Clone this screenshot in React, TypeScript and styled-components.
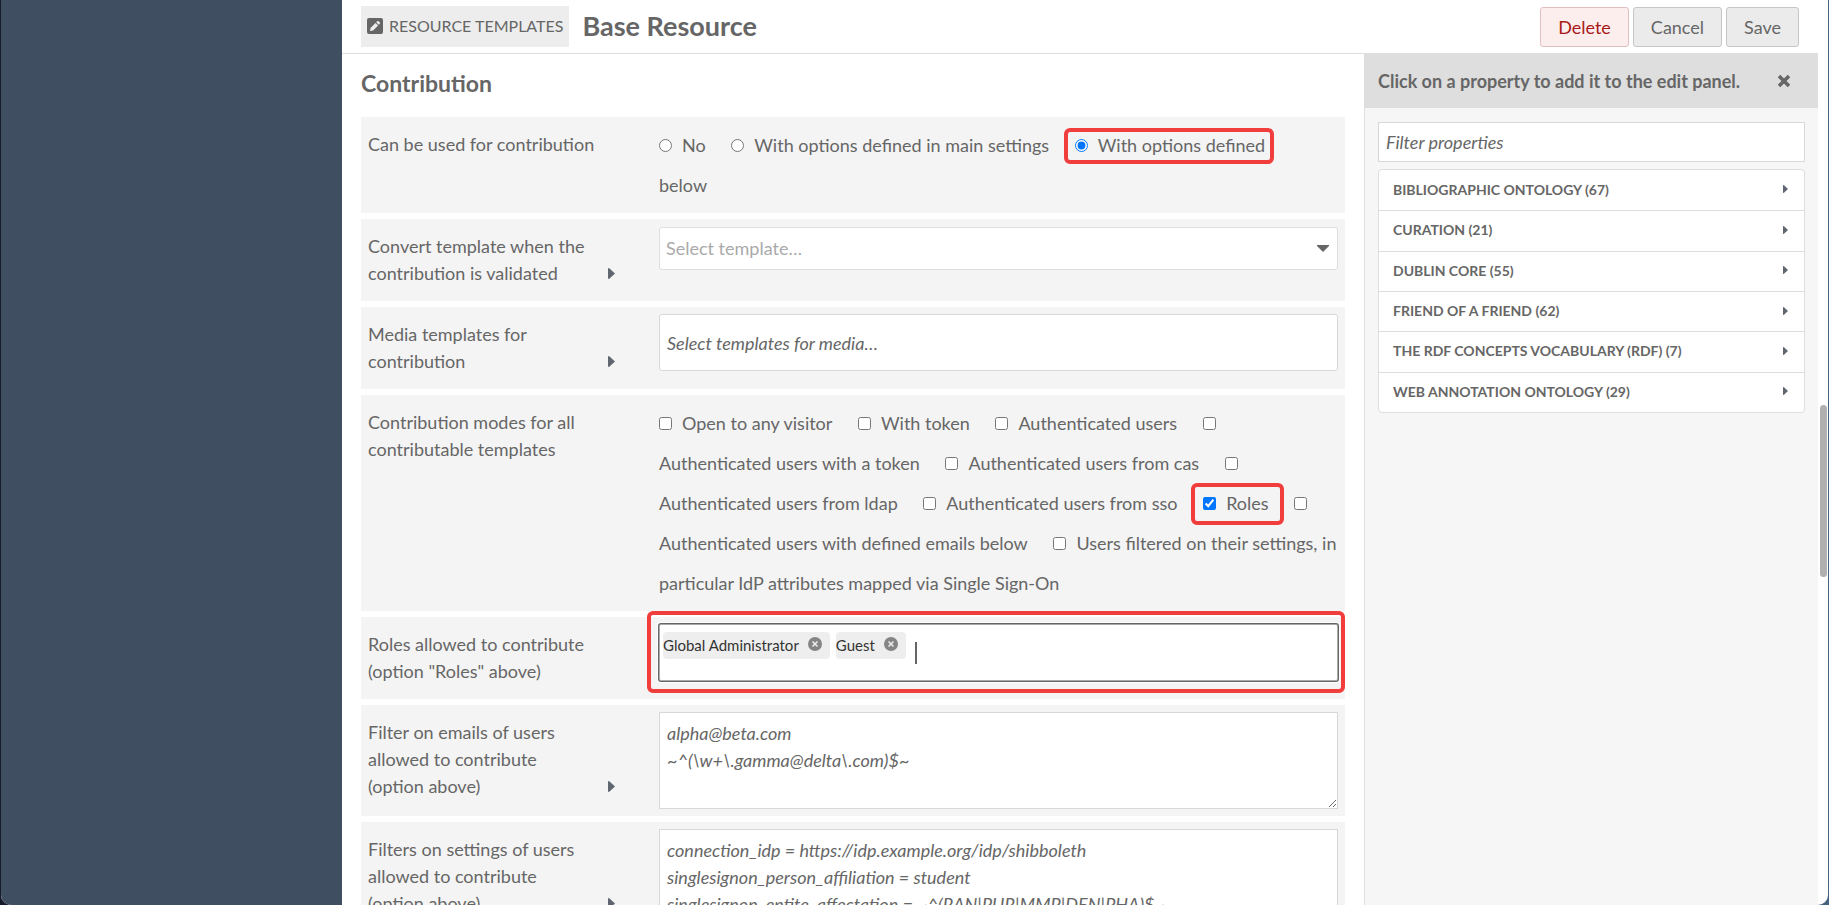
import React from 'react';
import styled, { createGlobalStyle, css } from 'styled-components';

const ink = '#666666';
const line = '#dedede';

const GlobalStyle = createGlobalStyle`
  *, *::before, *::after { box-sizing: border-box; }
  html, body { margin: 0; height: 100%; overflow: hidden; }
  body {
    background: linear-gradient(to right, #161b2b 50%, #44637f 50%);
    color: ${ink};
    font: 18px/27px Lato, "Noto Sans", sans-serif;
  }
  input, select, textarea, button { font: inherit; color: inherit; }
`;

const Page = styled.div`
  display: grid;
  grid-template-columns: 341fr 1476fr 10px;
  height: 100vh;
  margin: 0 1px;
  overflow: hidden;
  border-radius: 0 0 10px 10px;
  background: #fff;
`;

const SideNav = styled.nav`
  background: #404e61;
`;

const Main = styled.main`
  display: flex;
  flex-direction: column;
  min-width: 0;
  min-height: 0;
`;

const Header = styled.header`
  display: flex;
  align-items: flex-start;
  flex: none;
  height: 54px;
  padding: 6px 19px 0;
  border-bottom: 1px solid ${line};
`;

const SectionLink = styled.a`
  display: flex;
  align-items: center;
  gap: 6px;
  height: 41px;
  padding: 0 6px 2px;
  background: #ededed;
  color: ${ink};
  font-size: 16px;
  text-transform: uppercase;
  text-decoration: none;
`;

const Title = styled.h1`
  margin: 0 auto 0 13px;
  font-size: 27px;
  line-height: 39px;
`;

const Actions = styled.div`
  display: flex;
  gap: 4px;
  padding-top: 1px;
`;

const ActionButton = styled.button<{ $danger?: boolean }>`
  height: 40px;
  padding: 0 17px;
  border: 1px solid ${p => (p.$danger ? '#dfbfbf' : '#c6c6c6')};
  border-radius: 3px;
  background: ${p => (p.$danger ? '#fdeeee' : '#ebebeb')};
  color: ${p => (p.$danger ? '#a91919' : ink)};
`;

const Body = styled.div`
  display: grid;
  grid-template-columns: 1022fr 454fr;
  flex: 1;
  min-height: 0;
`;

const Form = styled.form`
  padding: 16px 19px 0;
  overflow: hidden;
`;

const SectionTitle = styled.h2`
  margin: 0 0 20px;
  font-size: 23px;
  line-height: 27px;
`;

const Fields = styled.div`
  display: flex;
  flex-direction: column;
  gap: 6px;
`;

const Field = styled.div`
  display: grid;
  grid-template-columns: 247fr 679fr;
  column-gap: 44px;
  align-items: start;
  padding: 0 7px;
  background: #f4f4f4;
`;

const FieldMeta = styled.div`
  display: flex;
  align-items: flex-end;
  justify-content: space-between;
  padding: 14px 0;
`;

const FieldLabel = styled.label<{ $wide?: boolean }>`
  max-width: ${p => (p.$wide ? 'none' : '220px')};
`;

const IconButton = styled.button`
  display: flex;
  align-items: center;
  justify-content: flex-end;
  width: 20px;
  height: 27px;
  padding: 0;
  border: 0;
  background: none;
`;

const Inputs = styled.div<{ $inset?: number }>`
  min-width: 0;
  padding: ${p => p.$inset ?? 7}px 0;
`;

const Options = styled.div`
  line-height: 40px;
`;

const OptionLabel = styled.label`
  margin-right: 21px;

  input {
    width: 13px;
    height: 13px;
    margin: 0 10px 0 0;
  }
`;

const frame = css`
  border: 4px solid #f23d3d;
  border-radius: 6px;
  content: "";
  pointer-events: none;
  position: absolute;
`;

const Marked = styled.span<{ $inset: string }>`
  position: relative;
  white-space: nowrap;

  &::after {
    ${frame}
    inset: ${p => p.$inset};
  }
`;

const MarkedBox = styled.div`
  position: relative;

  &::after {
    ${frame}
    inset: -13px -7px -12px -12px;
  }
`;

const SelectBox = styled.div`
  position: relative;

  select {
    appearance: none;
    display: block;
    width: 100%;
    height: 43px;
    padding: 0 6px;
    border: 1px solid ${line};
    border-radius: 3px;
    background: #fff;
    color: #aaa;
  }

  svg {
    position: absolute;
    right: 9px;
    top: 18px;
    pointer-events: none;
  }
`;

const TextInput = styled.input<{ $tall?: boolean }>`
  display: block;
  width: 100%;
  height: ${p => (p.$tall ? 57 : 40)}px;
  padding: 0 7px;
  border: 1px solid #d8d8d8;
  border-radius: ${p => (p.$tall ? 3 : 0)}px;
  background: #fff;

  &::placeholder { color: ${ink}; font-style: italic; opacity: 1; }
`;

const TextArea = styled.textarea`
  display: block;
  width: 100%;
  height: 97px;
  padding: 7px;
  border: 1px solid #d8d8d8;
  overflow: hidden;
  background: #fff;

  &::placeholder { color: ${ink}; font-style: italic; opacity: 1; }
`;

const TagBox = styled.div`
  display: flex;
  align-items: flex-start;
  gap: 6px;
  height: 57px;
  padding: 7px 3px;
  border: 1px solid #aaa;
  border-radius: 2px;
  box-shadow: 0 0 0 1px ${ink}, 0 0 0 2px #fff;
  background: #fff;
`;

const Tag = styled.span`
  display: flex;
  gap: 9px;
  padding-right: 8px;
  border-radius: 4px;
  background: #eee;
  color: #333;
  font-size: 15px;
`;

const TagRemove = styled.button`
  display: flex;
  height: 14px;
  margin-top: 5px;
  padding: 0;
  border: 0;
  background: none;
`;

const Caret = styled.span`
  width: 2px;
  height: 22px;
  margin: 10px 0 0 3px;
  background: ${ink};
`;

const TagInput = styled.input`
  flex: 1;
  min-width: 0;
  margin-top: 7px;
  padding: 0;
  border: 0;
  outline: 0;
  background: none;
`;

const Panel = styled.aside`
  border-left: 1px solid ${line};
  background: #f6f6f6;
`;

const PanelHeader = styled.div`
  display: flex;
  align-items: center;
  justify-content: space-between;
  height: 54px;
  padding: 0 27px 0 13px;
  background: ${line};

  h3 {
    margin: 0;
    font-size: 18px;
  }
`;

const PanelBody = styled.div`
  padding: 14px 13px;
`;

const VocabularyList = styled.ul`
  display: grid;
  grid-auto-rows: 1fr;
  height: 244px;
  margin: 7px 0 0;
  padding: 0;
  border: 1px solid ${line};
  border-radius: 4px;
  background: #fff;
  list-style: none;

  li + li { border-top: 1px solid ${line}; }
`;

const VocabularyButton = styled.button`
  display: flex;
  align-items: center;
  justify-content: space-between;
  width: 100%;
  height: 100%;
  padding: 0 16px 2px 14px;
  border: 0;
  background: none;
  font-size: 14px;
  font-weight: 700;
  text-transform: uppercase;
`;

const ScrollTrack = styled.div`
  padding: 405px 1px 0 2px;
`;

const ScrollThumb = styled.div`
  height: 172px;
  border-radius: 4px;
  background: #b0b0b0;
`;

const PenSquare = () => (
  <svg width="16" height="16" viewBox="0 0 16 16" aria-hidden="true">
    <rect width="16" height="16" rx="2" fill={ink} />
    <path
      d="M3 13l.5-3.1 5-5 2.600 2.600-5 5zM9.200 4.200l1-1c.4-.4.900-.4 1.300 0l1.300 1.300c.4.4.4.900 0 1.300l-1 1z"
      fill="#ededed"
    />
  </svg>
);

const CaretRight = ({ width = 7, height = 11 }: { width?: number; height?: number }) => (
  <svg width={width} height={height} viewBox="0 0 7 11" preserveAspectRatio="none" aria-hidden="true">
    <path d="M0 0.500L1 0L7 5.500L1 11L0 10.500Z" fill="#5f666f" />
  </svg>
);

const CaretDown = () => (
  <svg width="12" height="7" viewBox="0 0 12 7" aria-hidden="true">
    <path d="M0 0H12V1L6 7L0 1Z" fill={ink} />
  </svg>
);

const Cross = () => (
  <svg width="14" height="14" viewBox="0 0 14 14" aria-hidden="true">
    <path d="M2 2L12 12M12 2L2 12" stroke={ink} strokeWidth="3.500" />
  </svg>
);

const CircleCross = () => (
  <svg width="14" height="14" viewBox="0 0 14 14" aria-hidden="true">
    <circle cx="7" cy="7" r="7" fill="#858585" />
    <path d="M4.500 4.500L9.500 9.500M9.500 4.500L4.500 9.500" stroke="#eee" strokeWidth="1.500" />
  </svg>
);

const modes = [
  'Open to any visitor',
  'With token',
  'Authenticated users',
  'Authenticated users with a token',
  'Authenticated users from cas',
  'Authenticated users from ldap',
  'Authenticated users from sso',
  'Roles',
  'Authenticated users with defined emails below',
  'Users filtered on their settings, in particular IdP attributes mapped via Single Sign-On',
];

const vocabularies = [
  'Bibliographic Ontology (67)',
  'Curation (21)',
  'Dublin Core (55)',
  'Friend of a Friend (62)',
  'The RDF Concepts Vocabulary (RDF) (7)',
  'Web Annotation Ontology (29)',
];

interface RowProps {
  id: string;
  label: string;
  help?: boolean;
  wide?: boolean;
  inset?: number;
  group?: boolean;
  children: React.ReactNode;
}

const Row = ({ id, label, help, wide, inset, group, children }: RowProps) => (
  <Field role={group ? 'group' : undefined} aria-labelledby={group ? `${id}-label` : undefined}>
    <FieldMeta>
      <FieldLabel
        as={group ? 'span' : 'label'}
        $wide={wide}
        id={`${id}-label`}
        {...(group ? {} : { htmlFor: id })}
      >
        {label}
      </FieldLabel>
      {help && (
        <IconButton type="button" aria-label="Expand">
          <CaretRight />
        </IconButton>
      )}
    </FieldMeta>
    <Inputs $inset={inset}>{children}</Inputs>
  </Field>
);

export default function App() {
  return (
    <>
      <GlobalStyle />
      <Page>
        <SideNav />
        <Main>
          <Header>
            <SectionLink href="#templates">
              <PenSquare />
              Resource templates
            </SectionLink>
            <Title>Base Resource</Title>
            <Actions>
              <ActionButton type="button" $danger>Delete</ActionButton>
              <ActionButton type="button">Cancel</ActionButton>
              <ActionButton type="button">Save</ActionButton>
            </Actions>
          </Header>
          <Body>
            <Form>
              <SectionTitle>Contribution</SectionTitle>
              <Fields>
                <Row id="contributable" label="Can be used for contribution" inset={8} group wide>
                  <Options>
                    <OptionLabel><input type="radio" name="contributable" />No</OptionLabel>{' '}
                    <OptionLabel>
                      <input type="radio" name="contributable" />
                      With options defined in main settings
                    </OptionLabel>{' '}
                    <OptionLabel>
                      <Marked $inset="-6px -9px -8px -11px">
                        <input type="radio" name="contributable" defaultChecked />
                        With options defined
                      </Marked>{' '}
                      below
                    </OptionLabel>
                  </Options>
                </Row>
                <Row id="convert" label="Convert template when the contribution is validated" help inset={8}>
                  <SelectBox>
                    <select id="convert">
                      <option>Select template…</option>
                    </select>
                    <CaretDown />
                  </SelectBox>
                </Row>
                <Row id="media" label="Media templates for contribution" help>
                  <TextInput id="media" $tall placeholder="Select templates for media…" />
                </Row>
                <Row id="modes" label="Contribution modes for all contributable templates" inset={8} group>
                  <Options>
                    {modes.map(mode => (
                      <React.Fragment key={mode}>
                        <OptionLabel>
                          {mode === 'Roles' ? (
                            <Marked $inset="-9px -15px -11px -12px">
                              <input type="checkbox" defaultChecked />
                              {mode}
                            </Marked>
                          ) : (
                            <>
                              <input type="checkbox" />
                              {mode}
                            </>
                          )}
                        </OptionLabel>{' '}
                      </React.Fragment>
                    ))}
                  </Options>
                </Row>
                <Row id="roles" label={'Roles allowed to contribute (option "Roles" above)'}>
                  <MarkedBox>
                    <TagBox>
                      {['Global Administrator', 'Guest'].map(role => (
                        <Tag key={role}>
                          {role}
                          <TagRemove type="button" aria-label={`Remove ${role}`}>
                            <CircleCross />
                          </TagRemove>
                        </Tag>
                      ))}
                      <Caret />
                      <TagInput id="roles" />
                    </TagBox>
                  </MarkedBox>
                </Row>
                <Row id="emails" label="Filter on emails of users allowed to contribute (option above)" help>
                  <TextArea id="emails" placeholder={'alpha@beta.com\n~^(\\w+\\.gamma@delta\\.com)$~'} />
                </Row>
                <Row id="settings" label="Filters on settings of users allowed to contribute (option above)" help>
                  <TextArea
                    id="settings"
                    placeholder={
                      'connection_idp = https://idp.example.org/idp/shibboleth\nsinglesignon_person_affiliation = student\nsinglesignon_entite_affectation = ~^(RAN|PUR|MMP|DEN|PHA)$~'
                    }
                  />
                </Row>
              </Fields>
            </Form>
            <Panel>
              <PanelHeader>
                <h3>Click on a property to add it to the edit panel.</h3>
                <IconButton type="button" aria-label="Close">
                  <Cross />
                </IconButton>
              </PanelHeader>
              <PanelBody>
                <TextInput aria-label="Filter properties" placeholder="Filter properties" />
                <VocabularyList>
                  {vocabularies.map(name => (
                    <li key={name}>
                      <VocabularyButton type="button">
                        {name}
                        <CaretRight width={5} height={8} />
                      </VocabularyButton>
                    </li>
                  ))}
                </VocabularyList>
              </PanelBody>
            </Panel>
          </Body>
        </Main>
        <ScrollTrack>
          <ScrollThumb />
        </ScrollTrack>
      </Page>
    </>
  );
}
